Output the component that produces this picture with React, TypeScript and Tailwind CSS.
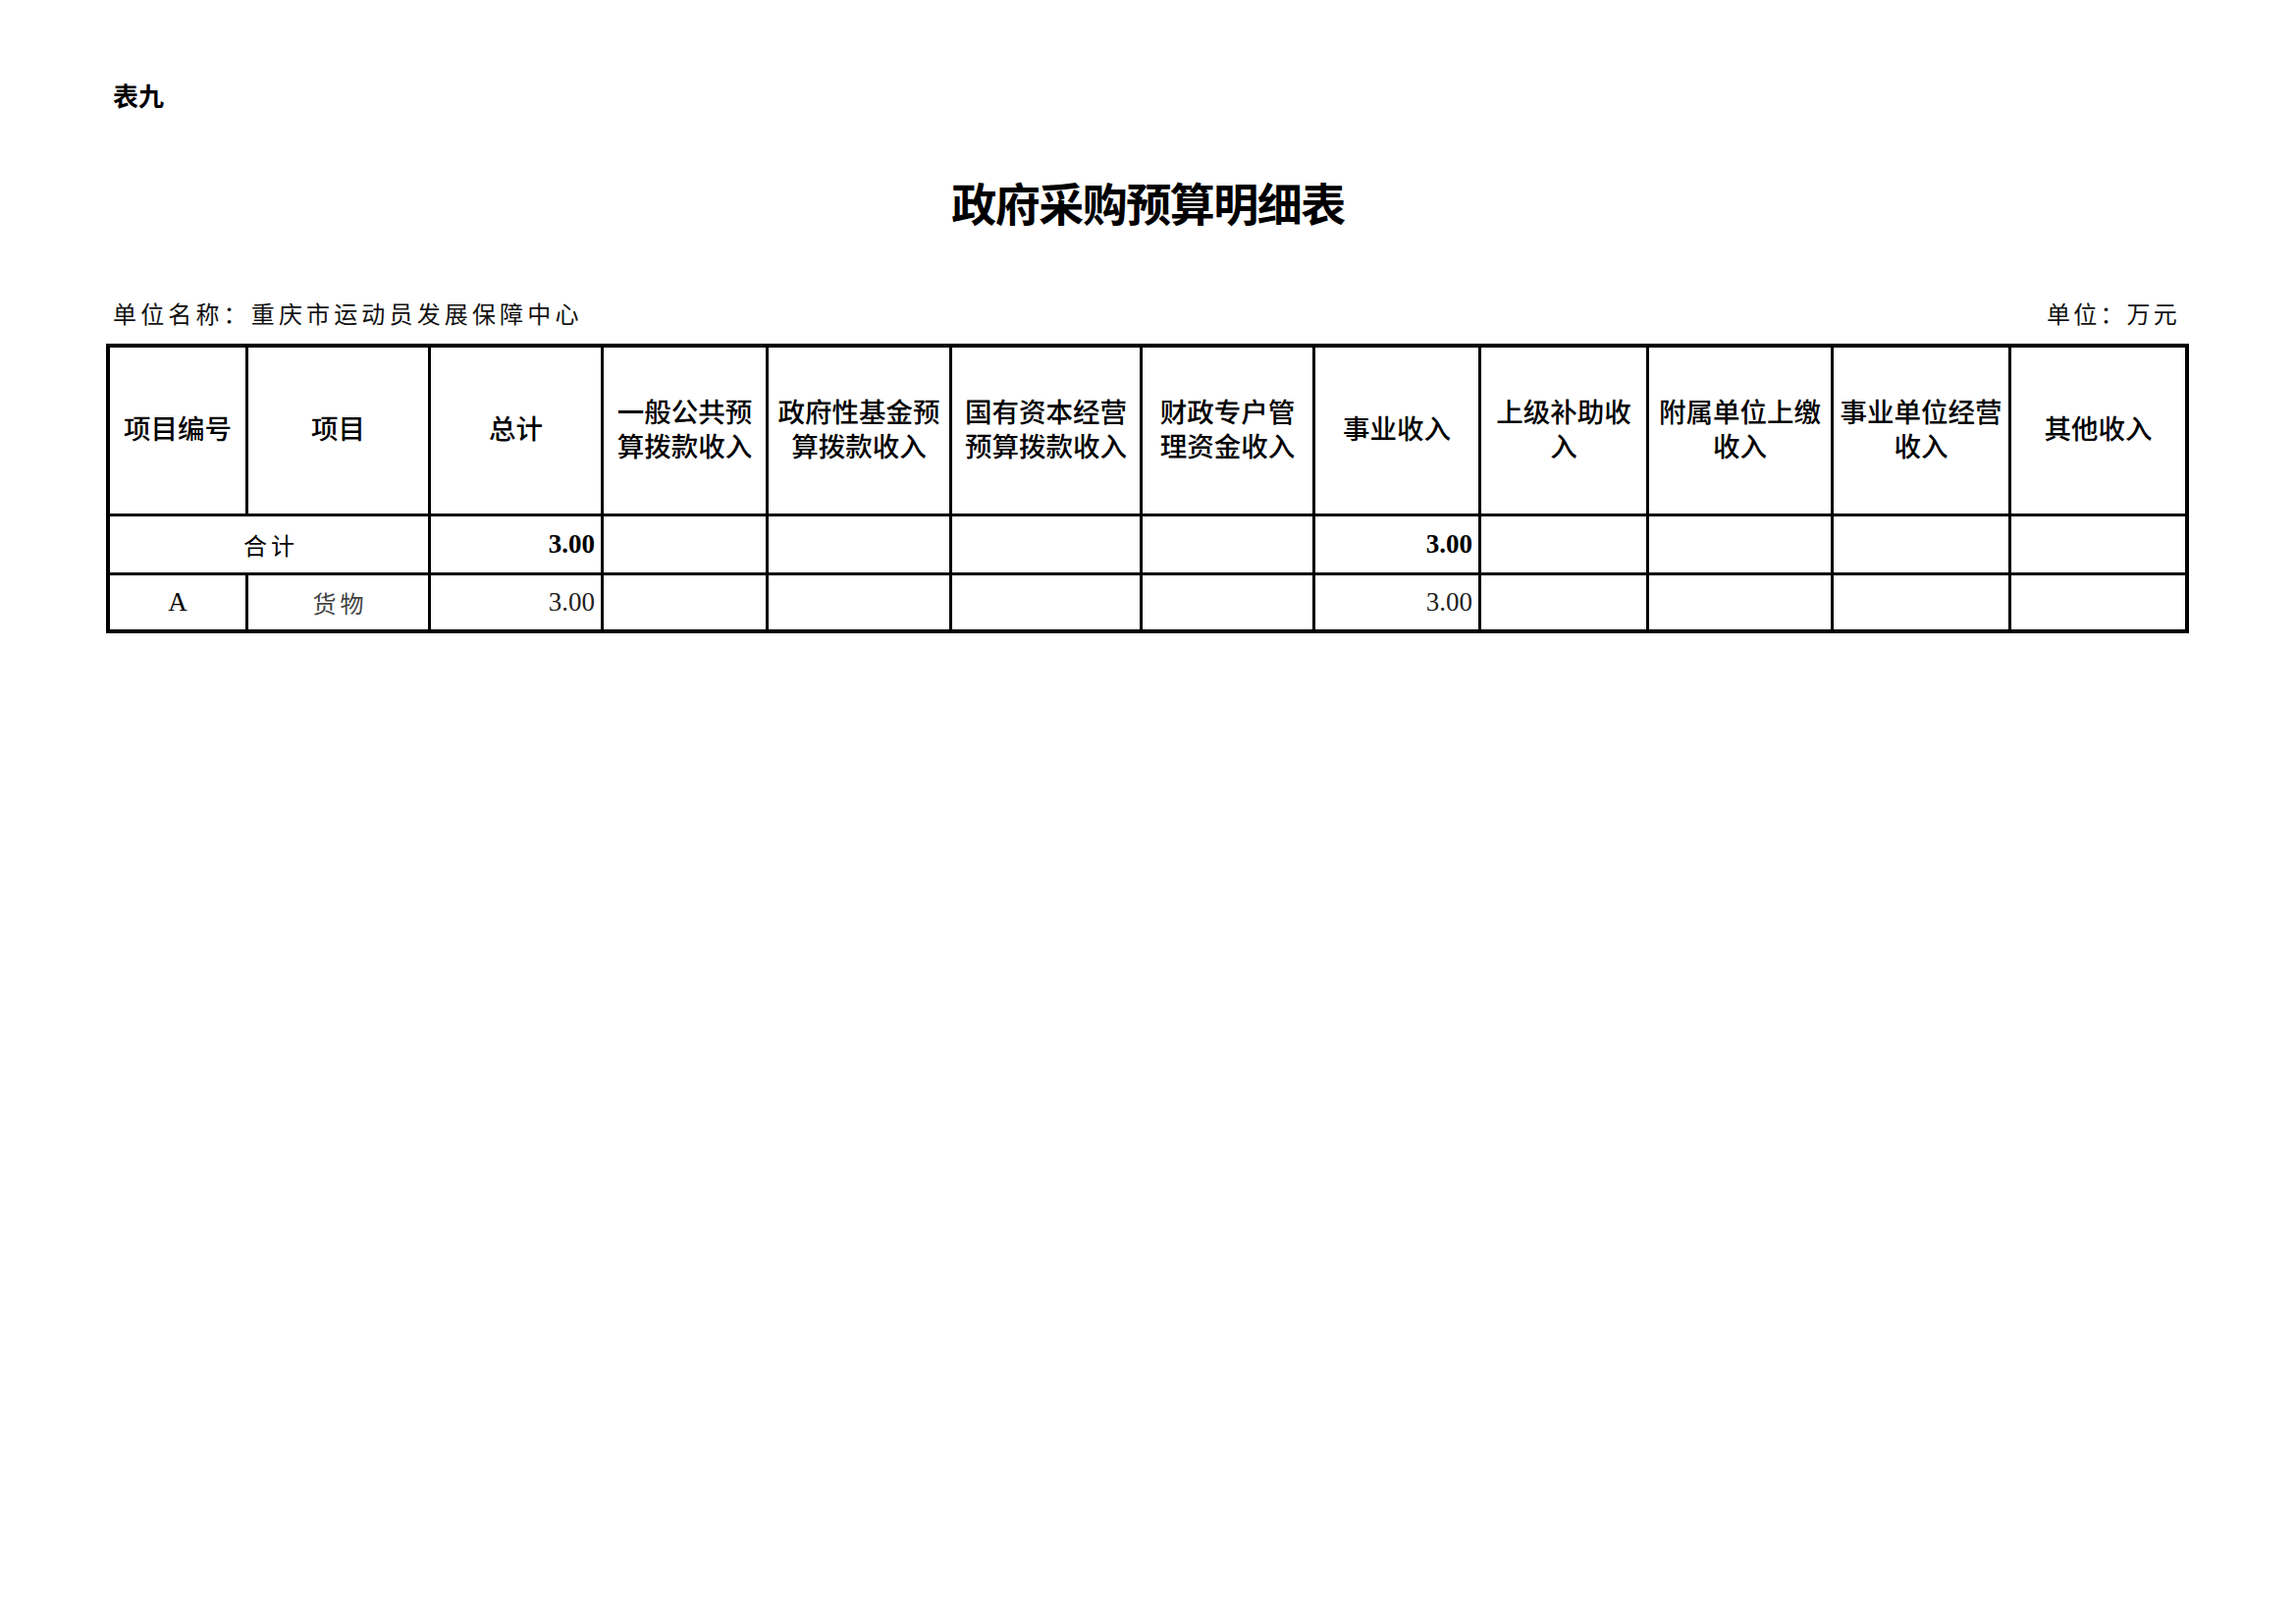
import React from "react";

const cjk = '"Noto Sans CJK SC", "Noto Sans", sans-serif';
const serif = '"Liberation Serif", "Noto Sans CJK SC", serif';

const headers: React.ReactNode[] = [
  "项目编号",
  "项目",
  "总计",
  <>一般公共预<br />算拨款收入</>,
  <>政府性基金预<br />算拨款收入</>,
  <>国有资本经营<br />预算拨款收入</>,
  <>财政专户管<br />理资金收入</>,
  "事业收入",
  <>上级补助收<br />入</>,
  <>附属单位上缴<br />收入</>,
  <>事业单位经营<br />收入</>,
  "其他收入",
];

export default function App() {
  return (
    <div className="w-[2339px] h-[1654px] bg-white text-black relative" style={{ fontFamily: cjk }}>
      <div className="pt-[84px] pl-[115px] text-[26px] leading-[26px] font-bold">表九</div>

      <div className="mt-[72px] flex justify-center">
        <div className="text-[46px] leading-[46px] font-bold tracking-[-1.5px]">政府采购预算明细表</div>
      </div>

      <div className="mt-[79px] flex items-end justify-between pl-[115px] pr-[118px]">
        <div className="text-[24px] leading-[24px] tracking-[4.15px] text-[#111]">单位名称：重庆市运动员发展保障中心</div>
        <div className="text-[24px] leading-[24px] tracking-[3.2px] text-[#111]">单位：万元</div>
      </div>

      <div className="mt-[19px] ml-[108px] w-[2122px] bg-black p-[4px] gap-[3px] grid grid-cols-[138px_183px_173px_165px_184px_191px_173px_166px_168px_185px_178px_177px] grid-rows-[169px_57px_55px]">
        {headers.map((h, i) => (
          <div key={i} className="bg-white flex items-center justify-center text-center text-[27.5px] leading-[35px] font-medium whitespace-nowrap pb-[6px]">
            <div>{h}</div>
          </div>
        ))}

        <div className="col-span-2 bg-white flex items-center justify-center text-[24px] tracking-[4px] pl-[4px]">合计</div>
        <div className="bg-white flex items-center justify-end pr-[6px] text-[27px] font-bold" style={{ fontFamily: serif }}>3.00</div>
        <div className="bg-white" />
        <div className="bg-white" />
        <div className="bg-white" />
        <div className="bg-white" />
        <div className="bg-white flex items-center justify-end pr-[6px] text-[27px] font-bold" style={{ fontFamily: serif }}>3.00</div>
        <div className="bg-white" />
        <div className="bg-white" />
        <div className="bg-white" />
        <div className="bg-white" />

        <div className="bg-white flex items-center justify-center text-[27px]" style={{ fontFamily: serif }}>A</div>
        <div className="bg-white flex items-center justify-center text-[24px] tracking-[4px] pl-[4px] text-[#444]">货物</div>
        <div className="bg-white flex items-center justify-end pr-[6px] text-[27px] text-[#222]" style={{ fontFamily: serif }}>3.00</div>
        <div className="bg-white" />
        <div className="bg-white" />
        <div className="bg-white" />
        <div className="bg-white" />
        <div className="bg-white flex items-center justify-end pr-[6px] text-[27px] text-[#222]" style={{ fontFamily: serif }}>3.00</div>
        <div className="bg-white" />
        <div className="bg-white" />
        <div className="bg-white" />
        <div className="bg-white" />
      </div>
    </div>
  );
}
